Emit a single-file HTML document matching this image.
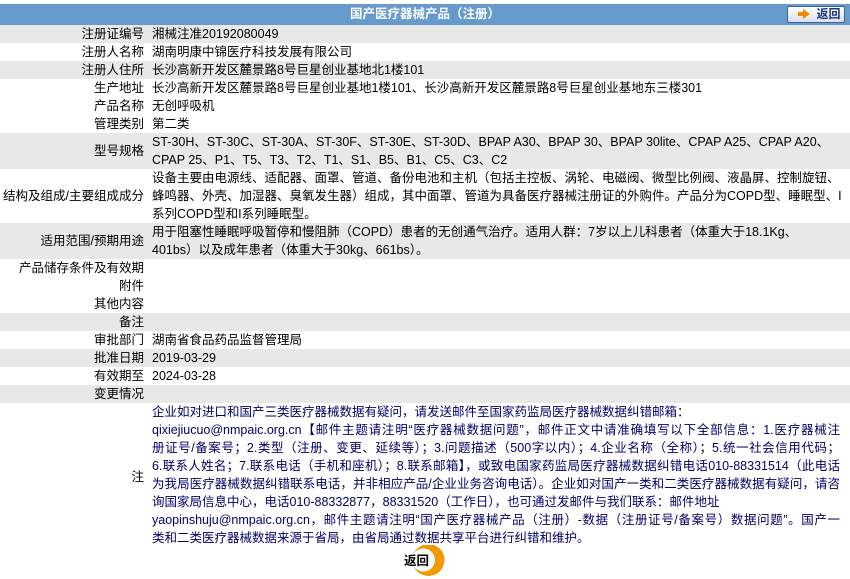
<!DOCTYPE html><html><head><meta charset="utf-8"><style>
body{margin:0;background:#fff;font-family:"Liberation Sans","Noto Sans CJK SC",sans-serif;font-size:12.5px;color:#000}
.hd{position:absolute;left:0;top:4px;width:850px;height:21px;background:#6699cc;color:#fff;font-weight:bold;text-align:center;line-height:21px;font-size:12.5px}
.btn{position:absolute;right:5px;top:2px;width:56px;height:15px;background:linear-gradient(#fff,#dde);border:1px solid #336699;border-radius:2px;color:#1a3a80;font-weight:bold;line-height:15px;font-size:12px}
.btn i{display:inline-block;width:0;height:0;border-left:7px solid #f08a00;border-top:5px solid transparent;border-bottom:5px solid transparent;margin-left:12px;margin-right:6px;vertical-align:-1px;position:relative}
.btn i:before{content:"";position:absolute;left:-12px;top:-2px;width:6px;height:4px;background:#f08a00}
table{position:absolute;left:0;top:25px;width:850px;border-collapse:collapse}
td{padding:0;line-height:18px;vertical-align:top;white-space:nowrap}
td.l{width:144px;text-align:right;padding-right:8px;vertical-align:middle}
tr.g{background:#e8e8e8}
.note{color:#000066;padding:0 8px 4px 0}
.note div{width:688px}
.note .j{text-align:justify;text-align-last:justify;white-space:normal}
.bk{position:absolute;left:396px;top:545px;width:55px;height:32px}
</style></head><body>
<div class="hd">国产医疗器械产品（注册）<div class="btn"><i></i>返回</div></div>
<table>
<tr class="g"><td class="l">注册证编号</td><td>湘械注准20192080049</td></tr>
<tr><td class="l">注册人名称</td><td>湖南明康中锦医疗科技发展有限公司</td></tr>
<tr class="g"><td class="l">注册人住所</td><td>长沙高新开发区麓景路8号巨星创业基地北1楼101</td></tr>
<tr><td class="l">生产地址</td><td>长沙高新开发区麓景路8号巨星创业基地1楼101、长沙高新开发区麓景路8号巨星创业基地东三楼301</td></tr>
<tr><td class="l">产品名称</td><td>无创呼吸机</td></tr>
<tr><td class="l">管理类别</td><td>第二类</td></tr>
<tr class="g"><td class="l">型号规格</td><td>ST-30H、ST-30C、ST-30A、ST-30F、ST-30E、ST-30D、BPAP A30、BPAP 30、BPAP 30lite、CPAP A25、CPAP A20、<br>CPAP 25、P1、T5、T3、T2、T1、S1、B5、B1、C5、C3、C2</td></tr>
<tr><td class="l">结构及组成/主要组成成分</td><td>设备主要由电源线、适配器、面罩、管道、备份电池和主机（包括主控板、涡轮、电磁阀、微型比例阀、液晶屏、控制旋钮、<br>蜂鸣器、外壳、加湿器、臭氧发生器）组成，其中面罩、管道为具备医疗器械注册证的外购件。产品分为COPD型、睡眠型、I<br>系列COPD型和I系列睡眠型。</td></tr>
<tr class="g"><td class="l">适用范围/预期用途</td><td>用于阻塞性睡眠呼吸暂停和慢阻肺（COPD）患者的无创通气治疗。适用人群：7岁以上儿科患者（体重大于18.1Kg、<br>401bs）以及成年患者（体重大于30kg、661bs）。</td></tr>
<tr><td class="l">产品储存条件及有效期</td><td></td></tr>
<tr><td class="l">附件</td><td></td></tr>
<tr><td class="l">其他内容</td><td></td></tr>
<tr class="g"><td class="l">备注</td><td></td></tr>
<tr><td class="l">审批部门</td><td>湖南省食品药品监督管理局</td></tr>
<tr class="g"><td class="l">批准日期</td><td>2019-03-29</td></tr>
<tr><td class="l">有效期至</td><td>2024-03-28</td></tr>
<tr class="g"><td class="l">变更情况</td><td></td></tr>
<tr><td class="l">注</td><td class="note"><div>企业如对进口和国产三类医疗器械数据有疑问，请发送邮件至国家药监局医疗器械数据纠错邮箱：</div><div class="j">qixiejiucuo@nmpaic.org.cn【邮件主题请注明“医疗器械数据问题”，邮件正文中请准确填写以下全部信息：1.医疗器械注</div><div class="j">册证号/备案号；2.类型（注册、变更、延续等）；3.问题描述（500字以内）；4.企业名称（全称）；5.统一社会信用代码；</div><div class="j">6.联系人姓名；7.联系电话（手机和座机）；8.联系邮箱】，或致电国家药监局医疗器械数据纠错电话010-88331514（此电话</div><div class="j">为我局医疗器械数据纠错联系电话，并非相应产品/企业业务咨询电话）。企业如对国产一类和二类医疗器械数据有疑问，请咨</div><div>询国家局信息中心，电话010-88332877，88331520（工作日），也可通过发邮件与我们联系：邮件地址</div><div class="j">yaopinshuju@nmpaic.org.cn，邮件主题请注明“国产医疗器械产品（注册）-数据（注册证号/备案号）数据问题”。国产一</div><div>类和二类医疗器械数据来源于省局，由省局通过数据共享平台进行纠错和维护。</div></td></tr>
</table>
<svg class="bk" viewBox="0 0 55 32"><circle cx="32.5" cy="15" r="16" fill="#f09a00"/><circle cx="27.5" cy="15" r="11.5" fill="#fff"/><text x="8" y="20" font-family="Liberation Sans,Noto Sans CJK SC,sans-serif" font-size="12.5" font-weight="bold" fill="#000">返回</text></svg>
</body></html>
